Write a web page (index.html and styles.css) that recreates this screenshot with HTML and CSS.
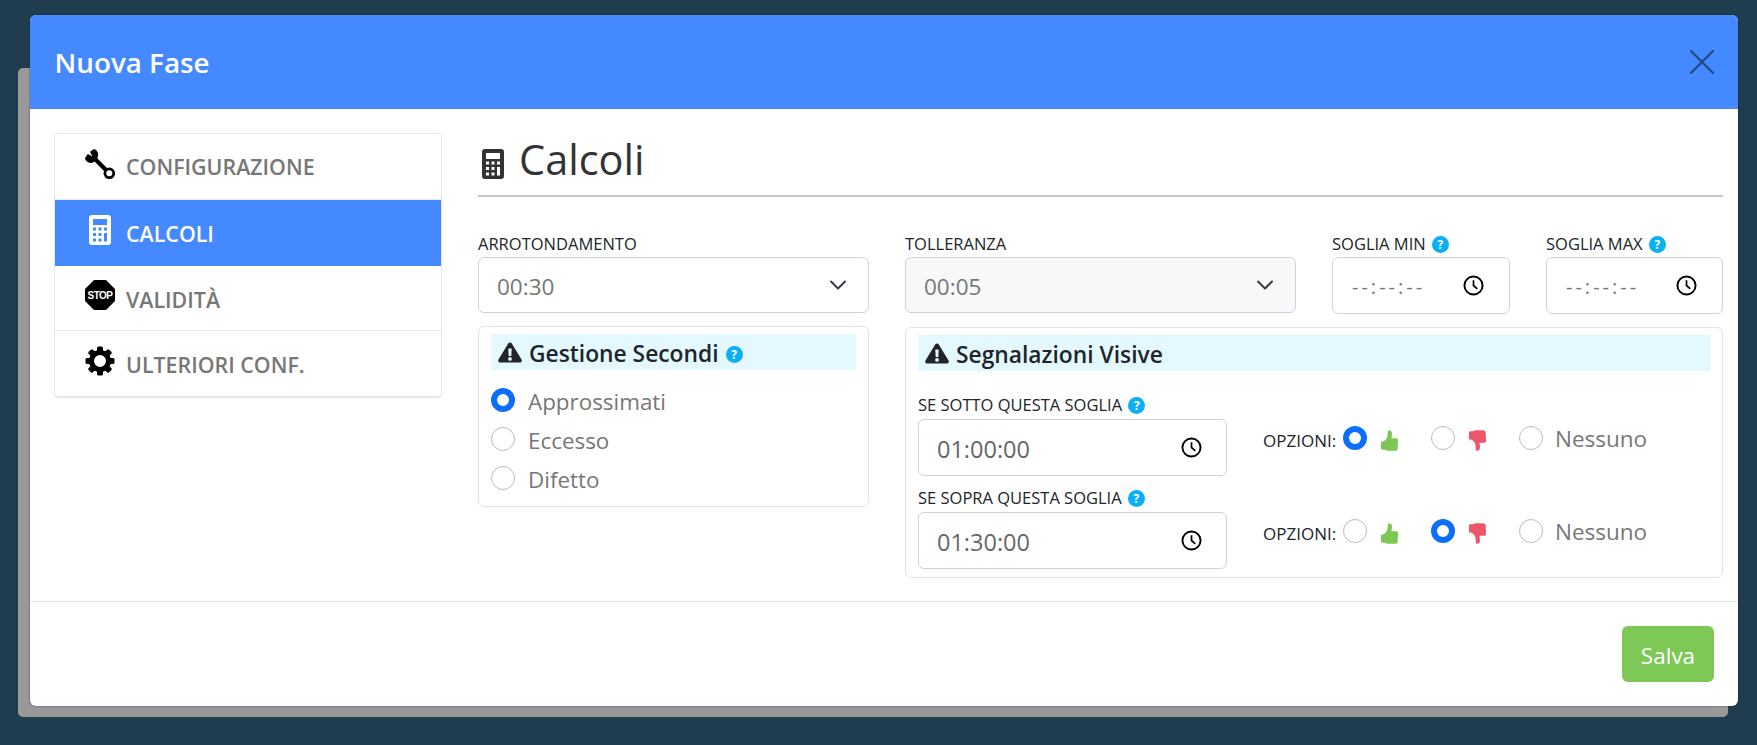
FILE: index.html
```html
<!DOCTYPE html>
<html lang="it">
<head>
<meta charset="utf-8">
<title>Nuova Fase</title>
<link rel="stylesheet" href="styles.css">
</head>
<body>
<svg class="defs" width="0" height="0" aria-hidden="true">
  <symbol id="i-calc" viewBox="0 0 22 30"><path fill-rule="evenodd" d="M3 0h16a3 3 0 0 1 3 3v24a3 3 0 0 1-3 3H3a3 3 0 0 1-3-3V3a3 3 0 0 1 3-3zM4 4v6h14V4zM4 12.500v3h3v-3zM9.500 12.500v3h3v-3zM15 12.500v3h3v-3zM4 18v3h3v-3zM9.500 18v3h3v-3zM15 18v8.500h3V18zM4 23.500v3h3v-3zM9.500 23.500v3h3v-3z"/></symbol>
  <symbol id="i-warn" viewBox="0 0 24 21"><path fill-rule="evenodd" d="M12 .5c.8 0 1.400.4 1.800 1.100l9.700 16c.8 1.400-.1 3-1.700 3H2.200c-1.600 0-2.500-1.600-1.700-3l9.700-16C10.600.9 11.200.5 12 .5zM10.300 6.500l.4 7.500h2.600l.4-7.500zM12 15a1.900 1.900 0 1 0 0 3.800 1.900 1.900 0 0 0 0-3.800z"/></symbol>
  <symbol id="i-clock" viewBox="0 0 22 22"><circle cx="11" cy="11" r="9.500" fill="none" stroke="currentColor" stroke-width="2"/><path d="M11 5.500V11l4 3.500" fill="none" stroke="currentColor" stroke-width="1.800"/></symbol>
  <symbol id="i-chev" viewBox="0 0 16 10"><path d="M1 1.500l7 7 7-7" fill="none" stroke="currentColor" stroke-width="2" stroke-linecap="round" stroke-linejoin="round"/></symbol>
  <symbol id="i-thumb" viewBox="0 0 17 21"><path d="M8 .2c2 0 3 1.500 3 3.500 0 1.500-.5 3-.5 4.500H15c1.500 0 2.300 1 2 2.200l-.3 8c-.1 1.500-1 2.400-2.500 2.400H7c-1.500 0-2-.5-3-1-.7-.3-1.300 0-2.500 0-.8 0-1.500-.5-1.500-1.200v-6c0-.8.5-1.200 1.400-1.200 1.500 0 2.500-.8 3.500-2.200C6 8.500 6.800 6 6.800 2 6.800 1 7.200.2 8 .2z"/></symbol>
</svg>

<div class="page-behind"></div>

<section class="modal">
  <header class="modal-head">
    <h1 class="modal-title">Nuova Fase</h1>
    <svg class="close" viewBox="0 0 24 24"><path d="M1 1l22 22M23 1L1 23" fill="none" stroke="currentColor" stroke-width="2.200" stroke-linecap="round"/></svg>
  </header>

  <div class="modal-body">
    <nav class="nav">
      <a class="nav-item">
        <span class="nav-icon"><svg class="ico-30" viewBox="0 0 30 30"><path d="M9 0L5 2.800 7.500 7.500 2.800 5 0 9c.3 3.200 3.500 5.500 7.500 4.800L10 12l2.500-3C14 5 12.500 .8 9 0z"/><path d="M9 9l12.500 12.500" stroke="#000" stroke-width="4.200" fill="none"/><circle cx="24.300" cy="24.300" r="4.400" fill="#fff" stroke="#000" stroke-width="2.800"/></svg></span>
        <span>CONFIGURAZIONE</span>
      </a>
      <a class="nav-item active">
        <span class="nav-icon"><svg class="ico-calc"><use href="#i-calc"/></svg></span>
        <span>CALCOLI</span>
      </a>
      <a class="nav-item">
        <span class="nav-icon"><svg class="ico-30" viewBox="0 0 30 30"><path d="M9 0h12l9 9v12l-9 9H9l-9-9V9z"/><text class="stop-text" x="15" y="19" text-anchor="middle">STOP</text></svg></span>
        <span>VALIDITÀ</span>
      </a>
      <a class="nav-item">
        <span class="nav-icon"><svg class="ico-30" viewBox="0 0 30 30"><circle cx="15" cy="15" r="8.500" fill="none" stroke="#000" stroke-width="5"/><g class="teeth"><rect x="12" y=".5" width="6" height="6" rx="1.500"/><rect x="12" y="23.500" width="6" height="6" rx="1.500"/><rect x=".5" y="12" width="6" height="6" rx="1.500"/><rect x="23.500" y="12" width="6" height="6" rx="1.500"/><rect x="12" y=".5" width="6" height="6" rx="1.500" transform="rotate(45 15 15)"/><rect x="12" y=".5" width="6" height="6" rx="1.500" transform="rotate(135 15 15)"/><rect x="12" y=".5" width="6" height="6" rx="1.500" transform="rotate(225 15 15)"/><rect x="12" y=".5" width="6" height="6" rx="1.500" transform="rotate(315 15 15)"/></g></svg></span>
        <span>ULTERIORI CONF.</span>
      </a>
    </nav>

    <main class="main">
      <h2 class="section-title"><svg class="ico-calc dark"><use href="#i-calc"/></svg><span class="section-text">Calcoli</span></h2>

      <div class="form-grid">
        <div class="col">
          <div class="field">
            <label class="lbl">ARROTONDAMENTO</label>
            <div class="ctl"><span>00:30</span><svg class="chev"><use href="#i-chev"/></svg></div>
          </div>
          <div class="box">
            <h3 class="strip"><svg class="warn"><use href="#i-warn"/></svg>Gestione Secondi <span class="help">?</span></h3>
            <div class="radios">
              <div class="radio-row"><span class="radio on"></span><span>Approssimati</span></div>
              <div class="radio-row"><span class="radio"></span><span>Eccesso</span></div>
              <div class="radio-row"><span class="radio"></span><span>Difetto</span></div>
            </div>
          </div>
        </div>

        <div class="col">
          <div class="top-fields">
            <div class="field grow">
              <label class="lbl">TOLLERANZA</label>
              <div class="ctl disabled"><span>00:05</span><svg class="chev"><use href="#i-chev"/></svg></div>
            </div>
            <div class="field time-min">
              <label class="lbl">SOGLIA MIN <span class="help">?</span></label>
              <div class="ctl time"><span class="empty-time">--:--:--</span><svg class="clock"><use href="#i-clock"/></svg></div>
            </div>
            <div class="field time-max">
              <label class="lbl">SOGLIA MAX <span class="help">?</span></label>
              <div class="ctl time"><span class="empty-time">--:--:--</span><svg class="clock"><use href="#i-clock"/></svg></div>
            </div>
          </div>

          <div class="box">
            <h3 class="strip"><svg class="warn"><use href="#i-warn"/></svg>Segnalazioni Visive</h3>
            <div class="thresholds">
              <div class="threshold">
                <div class="field wide">
                  <label class="lbl">SE SOTTO QUESTA SOGLIA <span class="help">?</span></label>
                  <div class="ctl time val"><span>01:00:00</span><svg class="clock"><use href="#i-clock"/></svg></div>
                </div>
                <div class="options">
                  <span class="opt-label">OPZIONI:</span>
                  <div class="opt"><span class="radio on"></span><svg class="thumb up"><use href="#i-thumb"/></svg></div>
                  <div class="opt"><span class="radio"></span><svg class="thumb down"><use href="#i-thumb"/></svg></div>
                  <div class="opt"><span class="radio"></span><span class="opt-text">Nessuno</span></div>
                </div>
              </div>
              <div class="threshold">
                <div class="field wide">
                  <label class="lbl">SE SOPRA QUESTA SOGLIA <span class="help">?</span></label>
                  <div class="ctl time val"><span>01:30:00</span><svg class="clock"><use href="#i-clock"/></svg></div>
                </div>
                <div class="options">
                  <span class="opt-label">OPZIONI:</span>
                  <div class="opt"><span class="radio"></span><svg class="thumb up"><use href="#i-thumb"/></svg></div>
                  <div class="opt"><span class="radio on"></span><svg class="thumb down"><use href="#i-thumb"/></svg></div>
                  <div class="opt"><span class="radio"></span><span class="opt-text">Nessuno</span></div>
                </div>
              </div>
            </div>
          </div>
        </div>
      </div>
    </main>
  </div>

  <footer class="modal-foot">
    <button class="save" type="button">Salva</button>
  </footer>
</section>
</body>
</html>
```

FILE: styles.css
```css
* { box-sizing: border-box; }
html, body { margin: 0; height: 100%; }
body {
  background: #203d4f;
  font-family: "Open Sans", "Noto Sans", sans-serif;
  color: #212529;
  overflow: hidden;
}
.defs { position: absolute; }

.page-behind {
  position: absolute;
  left: 18px;
  top: 68px;
  width: 1710px;
  height: 649px;
  background: #999;
  border-radius: 5px;
}

.modal {
  position: absolute;
  left: 30px;
  top: 15px;
  width: 1708px;
  height: 691px;
  background: #fff;
  border-radius: 6px;
  box-shadow: 0 0 2px rgba(0, 0, 0, .6);
  display: flex;
  flex-direction: column;
  overflow: hidden;
}

.modal-head {
  height: 94px;
  flex: none;
  background: #4489ff;
  display: flex;
  align-items: center;
  justify-content: space-between;
  padding: 0 24px 0 24.500px;
}
.modal-title {
  margin: 0;
  color: #fff;
  font-size: 27.800px;
  font-weight: 600;
}
.close { width: 24px; height: 24px; color: #234880; }

.modal-body {
  flex: 1;
  display: flex;
  gap: 36px;
  padding: 24px 15px 0 24px;
}

.nav {
  width: 388px;
  flex: none;
  align-self: flex-start;
  border: 1px solid #e3e6ea;
  border-bottom-width: 2px;
  border-radius: 5px;
  overflow: hidden;
}
.nav-item {
  height: 66px;
  display: flex;
  align-items: center;
  padding-left: 30px;
  gap: 11px;
  font-size: 21.400px;
  font-weight: 600;
  color: #777;
  border-bottom: 1px solid #e9ecef;
}
.nav-item:nth-child(n+3) { height: 65px; padding-top: 2px; }
.nav-item:last-child { border-bottom: 0; }
.nav-item.active { background: #4489ff; color: #fff; border-bottom: 0; }
.nav-icon {
  width: 30px;
  height: 30px;
  margin-bottom: 6px;
  display: flex;
  justify-content: center;
}
.nav-item:nth-child(n+3) .nav-icon { margin-bottom: 8px; }
.ico-30 { width: 30px; height: 30px; display: block; }
.ico-calc { width: 22px; height: 30px; fill: #fff; display: block; }
.ico-calc.dark { fill: #333; flex: none; }
.stop-text { font: bold 10px "Liberation Sans", sans-serif; fill: #fff; letter-spacing: -.5px; }

.main { flex: 1; min-width: 0; }
.section-title {
  margin: 0;
  height: 64px;
  border-bottom: 2px solid #c8c8c8;
  display: flex;
  align-items: center;
  gap: 15px;
  padding-left: 4px;
  font-size: 41.500px;
  font-weight: 500;
  color: #333;
}
.section-text { margin-bottom: 11px; }

.form-grid {
  display: grid;
  grid-template-columns: 391px 1fr;
  gap: 36px;
  margin-top: 34px;
}
.col { display: flex; flex-direction: column; gap: 13px; min-width: 0; }
.top-fields { display: flex; gap: 36px; }
.grow { width: 391px; flex: none; }
.time-min { width: 178px; flex: none; }
.time-max { width: 177px; flex: none; }
.wide { width: 309px; flex: none; }

.lbl {
  display: block;
  height: 26px;
  line-height: 25px;
  font-size: 16.500px;
  white-space: nowrap;
  color: #212529;
}
.threshold .lbl { line-height: 23px; }
.help {
  display: inline-block;
  width: 17px;
  height: 17px;
  line-height: 17px;
  border-radius: 50%;
  background: #0aaff5;
  color: #fff;
  font-size: 12px;
  font-weight: 700;
  text-align: center;
  vertical-align: 1px;
  margin-left: 2px;
}

.ctl {
  height: 56px;
  border: 1px solid #ced4da;
  border-radius: 6px;
  display: flex;
  align-items: center;
  justify-content: space-between;
  padding: 2px 22px 0 18px;
  font-size: 22.500px;
  color: #777;
}
.ctl.disabled { background: #f7f8fa; }
.ctl.time { height: 57px; padding: 2px 25px 0 18px; }
.ctl.val { color: #666; font-size: 23.500px; padding-right: 24px; }
.empty-time { font-size: 20px; letter-spacing: 3px; margin-left: 1px; }
.chev { width: 16px; height: 10px; color: #343a40; margin-top: -2px; }
.clock { width: 21px; height: 21px; color: #000; margin-top: -3px; }

.box {
  border: 1px solid #e2e4e8;
  border-radius: 6px;
  padding: 7px 12px 8px;
}
.strip {
  margin: 0;
  height: 36px;
  background: #e3f9ff;
  display: flex;
  align-items: center;
  padding: 2px 0 0 7px;
  font-size: 22.800px;
  font-weight: 600;
  color: #212529;
}
.warn { width: 24px; height: 21px; fill: #212529; margin-right: 7px; margin-top: -1px; flex: none; }
.strip .help { margin-left: 7px; vertical-align: baseline; margin-top: 2px; }

.radios { margin: 12px 0 -1px; display: flex; flex-direction: column; }
.radio-row {
  height: 39px;
  display: flex;
  align-items: center;
  gap: 13px;
  font-size: 22.400px;
  color: #777;
}
.radio {
  width: 24px;
  height: 24px;
  flex: none;
  border-radius: 50%;
  border: 1px solid #bbb;
  background: #fff;
}
.radio-row .radio { margin-top: -3px; }
.radio.on { border: 6.500px solid #0d6efd; }

.thresholds { margin-top: 22px; display: flex; flex-direction: column; gap: 10px; }
.threshold { display: flex; gap: 36px; }
.options {
  display: grid;
  grid-template-columns: 80px 88px 88px auto;
  align-items: center;
  height: 32px;
  margin-top: 28px;
}
.opt-label { font-size: 17px; margin-top: 6px; white-space: nowrap; }
.opt { display: flex; align-items: center; }
.opt-text { font-size: 22.500px; color: #777; margin: 2px 0 0 12px; }
.thumb { width: 17px; height: 21px; margin-left: 14px; margin-top: 5px; }
.thumb.up { fill: #7dc855; }
.thumb.down { fill: #f0566a; transform: scaleY(-1); }

.modal-foot {
  height: 105px;
  flex: none;
  border-top: 1px solid #e2e4e8;
  display: flex;
  justify-content: flex-end;
  align-items: flex-start;
  padding: 24px 24px 0 0;
}
.save {
  width: 92px;
  height: 56px;
  border: 0;
  border-radius: 6px;
  padding-top: 3px;
  background: #7ec856;
  color: #fff;
  font-family: inherit;
  font-size: 22.500px;
}
```
